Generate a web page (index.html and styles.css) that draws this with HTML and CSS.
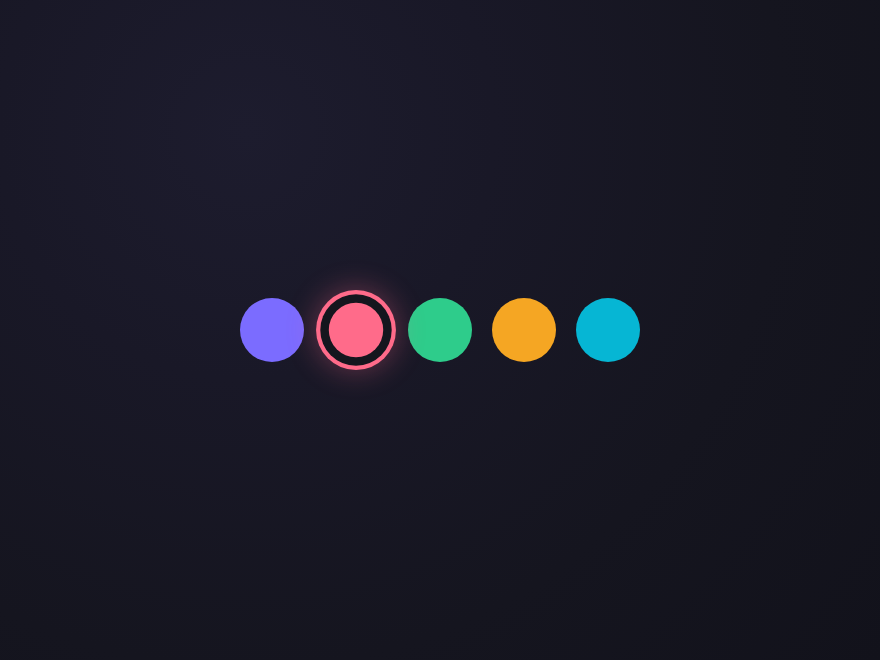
FILE: index.html
```html
<!DOCTYPE html>
<html>
<head>
<meta charset="utf-8">
<link rel="stylesheet" href="styles.css">
</head>
<body>
<div class="stage">
  <div class="swatches">
    <div class="swatch purple"></div>
    <div class="swatch pink selected"></div>
    <div class="swatch green"></div>
    <div class="swatch orange"></div>
    <div class="swatch cyan"></div>
  </div>
</div>
</body>
</html>
```
FILE: styles.css
```css
html, body {
  margin: 0;
  padding: 0;
}
body {
  width: 880px;
  height: 660px;
  background: radial-gradient(circle at 28% 20%, #1d1c2e 0%, #191827 30%, #15151f 65%, #12121b 100%);
  font-family: "Inter", sans-serif;
}
.stage {
  width: 880px;
  height: 660px;
  display: flex;
  align-items: center;
  justify-content: center;
}
.swatches {
  display: flex;
  gap: 20px;
}
.swatch {
  width: 64px;
  height: 64px;
  border-radius: 50%;
}
.purple { background: #7b6cff; }
.pink { background: #ff6b8a; }
.green { background: #2ecc8b; }
.orange { background: #f5a623; }
.cyan { background: #06b6d4; }
.selected {
  transform: scale(0.85);
  box-shadow: 0 0 0 10px #15161e, 0 0 0 15px #ff6b8a, 0 0 32px 18px rgba(255, 107, 138, 0.3);
}
```
